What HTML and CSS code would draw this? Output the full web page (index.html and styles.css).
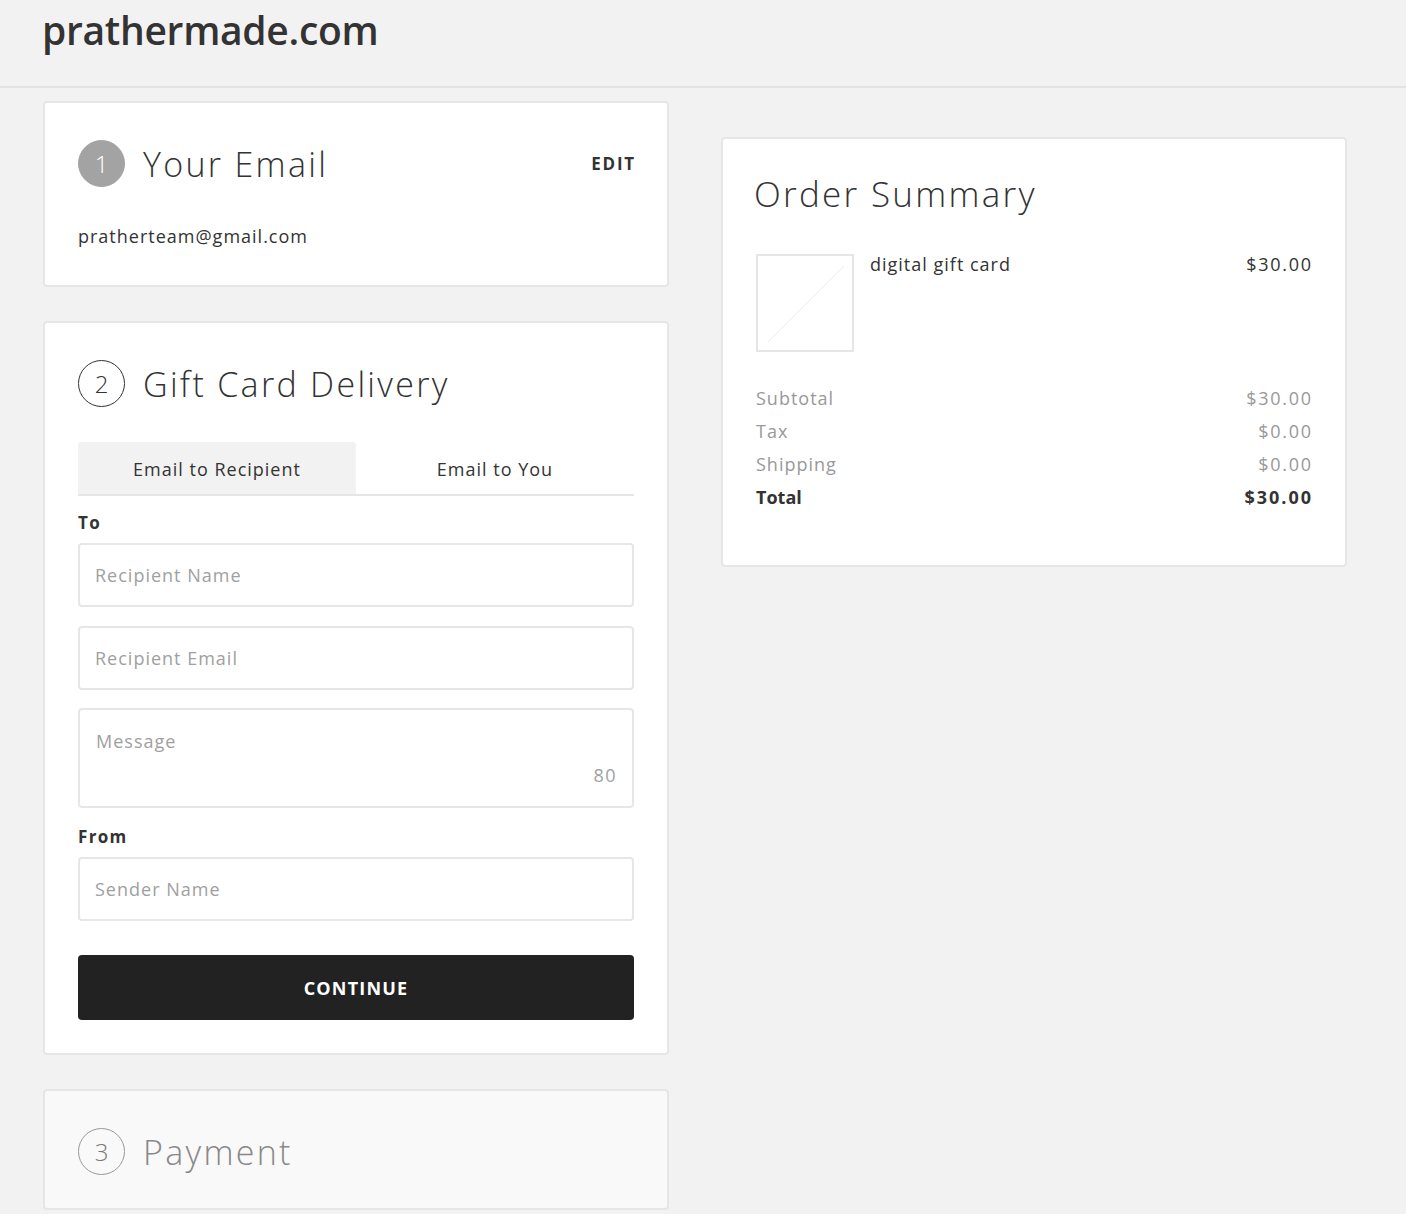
FILE: index.html
```html
<!DOCTYPE html>
<html lang="en">
<head>
<meta charset="utf-8">
<title>prathermade.com — Checkout</title>
<link rel="stylesheet" href="styles.css">
</head>
<body>
<header class="site-header">
  <div class="logo">prathermade.com</div>
</header>
<main class="checkout">
  <div class="steps">
    <section class="card step">
      <div class="step-head">
        <span class="step-num done">1</span>
        <h2 class="step-title">Your Email</h2>
        <a class="edit" href="#">EDIT</a>
      </div>
      <p class="email-value">pratherteam@gmail.com</p>
    </section>

    <section class="card step">
      <div class="step-head">
        <span class="step-num">2</span>
        <h2 class="step-title">Gift Card Delivery</h2>
      </div>
      <div class="tabs">
        <div class="tab active">Email to Recipient</div>
        <div class="tab">Email to You</div>
      </div>
      <form class="delivery-form">
        <label class="field-label">To</label>
        <input class="field" type="text" placeholder="Recipient Name">
        <input class="field" type="text" placeholder="Recipient Email">
        <div class="message-box">
          <textarea class="message" placeholder="Message"></textarea>
          <span class="counter">80</span>
        </div>
        <label class="field-label from">From</label>
        <input class="field" type="text" placeholder="Sender Name">
        <button class="continue" type="button">CONTINUE</button>
      </form>
    </section>

    <section class="card step inactive">
      <div class="step-head">
        <span class="step-num muted">3</span>
        <h2 class="step-title">Payment</h2>
      </div>
    </section>
  </div>

  <aside class="card summary">
    <h2 class="summary-title">Order Summary</h2>
    <div class="line-item">
      <div class="thumb">
        <svg width="94" height="94" viewBox="0 0 94 94"><line x1="10" y1="86" x2="86" y2="10" stroke="#ececec" stroke-width="1"/></svg>
      </div>
      <div class="item-name">digital gift card</div>
      <div class="item-price">$30.00</div>
    </div>
    <div class="totals">
      <div class="row"><span>Subtotal</span><span class="amt">$30.00</span></div>
      <div class="row"><span>Tax</span><span class="amt">$0.00</span></div>
      <div class="row"><span>Shipping</span><span class="amt">$0.00</span></div>
      <div class="row total"><span>Total</span><span class="amt">$30.00</span></div>
    </div>
  </aside>
</main>
</body>
</html>
```
FILE: styles.css
```css
* { box-sizing: border-box; }
html, body { margin: 0; padding: 0; }
body {
  background: #f2f2f2;
  font-family: "Open Sans", "Lato", sans-serif;
  color: #333;
  height: 1214px;
  overflow: hidden;
}
.site-header {
  height: 88px;
  border-bottom: 2px solid #e3e3e3;
  padding: 5px 0 0 42px;
}
.logo {
  font-size: 39px;
  font-weight: 600;
  line-height: 50px;
  color: #333;
  letter-spacing: -0.3px;
}
.checkout {
  display: flex;
  align-items: flex-start;
  gap: 52px;
  padding: 13px 0 0 43px;
}
.steps {
  display: flex;
  flex-direction: column;
  gap: 34px;
  width: 626px;
}
.card {
  background: #fff;
  border: 2px solid #e6e6e6;
  border-radius: 4px;
}
.step { padding: 37px 33px 33px 33px; }
.step-head {
  display: flex;
  align-items: center;
  gap: 18px;
  height: 47px;
}
.step-num {
  width: 47px;
  height: 47px;
  border-radius: 50%;
  border: 1.5px solid #333;
  display: flex;
  align-items: center;
  justify-content: center;
  font-size: 24px;
  font-weight: 300;
  color: #333;
  flex: none;
}
.step-num.done { background: #a3a3a3; border-color: #a3a3a3; color: #fff; }
.step-num.muted { border-color: #999; color: #777; }
.step-title {
  margin: 0;
  font-size: 34px;
  font-weight: 300;
  color: #333;
  flex: 1;
  letter-spacing: 2.3px;
}
.inactive { background: #f9f9f9; padding-bottom: 33px; }
.inactive .step-title { color: #888; }
.edit {
  font-size: 17px;
  font-weight: 700;
  color: #333;
  text-decoration: none;
  letter-spacing: 1.8px;
  margin-right: -2px;
}
.email-value {
  margin: 37px 0 4px;
  font-size: 18px;
  line-height: 24px;
  letter-spacing: 1px;
}
.tabs {
  display: flex;
  margin-top: 35px;
  border-bottom: 2px solid #e6e6e6;
}
.tab {
  flex: 1;
  height: 52px;
  display: flex;
  align-items: center;
  justify-content: center;
  font-size: 18px;
  color: #333;
  border-radius: 3px 3px 0 0;
  padding-top: 2px;
  letter-spacing: 1px;
}
.tab.active { background: #f2f2f2; }
.delivery-form { display: flex; flex-direction: column; }
.field-label {
  font-size: 17px;
  font-weight: 700;
  line-height: 22px;
  margin: 16px 0 9px;
  letter-spacing: 1.3px;
}
.field-label.from { margin-top: 18px; }
.field {
  height: 64px;
  border: 2px solid #e6e6e6;
  border-radius: 4px;
  padding: 0 15px;
  font-family: inherit;
  font-size: 18px;
  color: #333;
  margin-bottom: 19px;
  outline: none;
  letter-spacing: 1px;
}
.field::placeholder, .message::placeholder { color: #a0a0a0; }
.message-box {
  height: 100px;
  border: 2px solid #e6e6e6;
  border-radius: 4px;
  display: flex;
  flex-direction: column;
  padding: 19px 16px 10px 16px;
  margin-top: -1px;
}
.message {
  border: none;
  resize: none;
  outline: none;
  font-family: inherit;
  font-size: 18px;
  padding: 0;
  height: 26px;
  color: #333;
  overflow: hidden;
  letter-spacing: 1px;
}
.counter {
  align-self: flex-end;
  font-size: 18px;
  color: #a0a0a0;
  margin-top: 8px;
  letter-spacing: 1.5px;
  margin-right: -1px;
}
.delivery-form .field:last-of-type { margin-bottom: 0; }
.continue {
  margin-top: 34px;
  height: 65px;
  background: #222;
  color: #fff;
  border: none;
  border-radius: 4px;
  font-family: inherit;
  font-size: 18px;
  font-weight: 700;
  letter-spacing: 1.2px;
}
.summary {
  width: 626px;
  margin-top: 36px;
  padding: 33px 34px 51px 31px;
}
.summary-title {
  margin: 0;
  font-size: 35px;
  font-weight: 300;
  line-height: 44px;
  letter-spacing: 2.3px;
}
.line-item {
  display: flex;
  align-items: flex-start;
  margin-top: 38px;
}
.thumb {
  width: 98px;
  height: 98px;
  border: 2px solid #e6e6e6;
  flex: none;
  margin-left: 2px;
}
.thumb svg { display: block; }
.item-name {
  flex: 1;
  margin-left: 16px;
  font-size: 18px;
  line-height: 20px;
  letter-spacing: 1px;
}
.item-price { font-size: 18px; line-height: 20px; letter-spacing: 1.7px; margin-right: -1.7px; }
.totals { margin-top: 30px; }
.row {
  display: flex;
  justify-content: space-between;
  font-size: 18px;
  line-height: 33px;
  color: #999;
  padding-left: 2px;
  letter-spacing: 1px;
}
.row .amt { letter-spacing: 1.7px; margin-right: -1.7px; }
.row.total { color: #333; font-weight: 700; letter-spacing: 0; }
.row.total .amt { letter-spacing: 2px; margin-right: -2px; }
```
